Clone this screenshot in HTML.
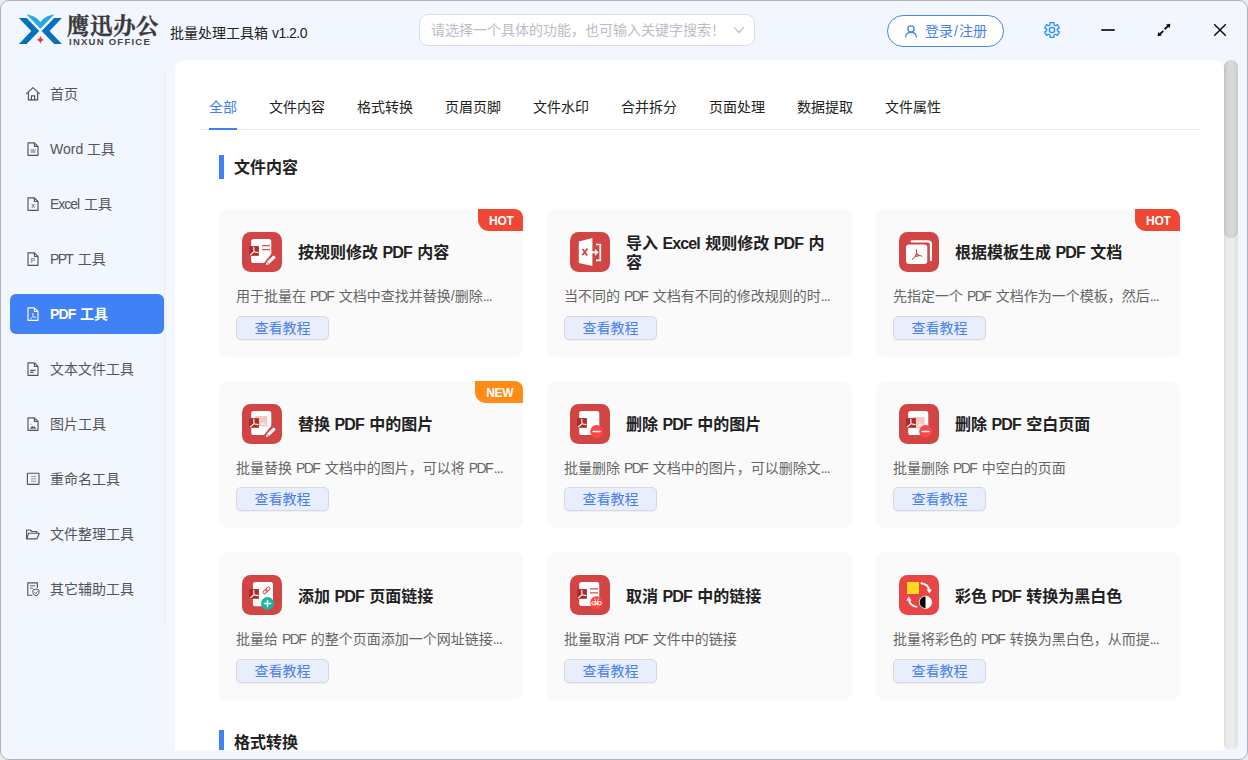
<!DOCTYPE html>
<html lang="zh-CN">
<head>
<meta charset="utf-8">
<title>鹰迅办公 批量处理工具箱</title>
<style>
*{box-sizing:border-box;margin:0;padding:0}
html,body{width:1248px;height:760px;overflow:hidden;background:#ebebeb}
body{font-family:"Liberation Sans","Noto Sans CJK SC",sans-serif;color:#222;position:relative}
.win{position:absolute;left:0;top:0;width:1248px;height:760px;background:#f2f6fe;border:1px solid #b3b3b3;border-radius:9px;overflow:hidden}
.abs{position:absolute}
/* ---------- title bar ---------- */
.brand-cn{position:absolute;left:66px;top:8px;font-family:"Noto Serif CJK SC","Noto Sans CJK SC",serif;font-weight:700;-webkit-text-stroke:0.35px #3a3a3a;font-size:22.6px;line-height:30px;color:#3a3a3a;letter-spacing:0.4px;white-space:nowrap}
.brand-en{position:absolute;left:68px;top:34.5px;font-weight:700;font-size:9.5px;line-height:12px;color:#444;letter-spacing:1.25px;white-space:nowrap}
.app-title{position:absolute;left:169px;top:22px;font-size:14px;line-height:20px;color:#222;white-space:nowrap}
.search{position:absolute;left:418px;top:13px;width:336px;height:32px;border:1px solid #d9dde6;border-radius:9px;background:#fff}
.search span{position:absolute;left:11px;top:5px;font-size:14px;line-height:20px;color:#b9bdc6;white-space:nowrap}
.login{position:absolute;left:886px;top:14px;width:117px;height:32px;border:1px solid #4a86f2;border-radius:16px;background:#fff}
.login span{position:absolute;left:37px;top:5px;font-size:14px;line-height:20px;color:#3f7ff2;white-space:nowrap}
/* ---------- sidebar ---------- */
.nav{position:absolute;left:9px;width:154px;height:40px;border-radius:6px}
.nav span{position:absolute;left:40px;top:10px;font-size:14px;line-height:20px;color:#555;white-space:nowrap}
.nav svg{position:absolute;left:16px;top:13px}
.nav.on{background:#4082f5}
.nav.on span{color:#fff;font-weight:700}
.vline{position:absolute;left:163px;top:69px;width:1px;height:555px;background:#ebebf1}
/* ---------- panel ---------- */
.panel{position:absolute;left:174px;top:59px;width:1049px;height:690px;background:#fff;border-radius:10px 10px 0 0;overflow:hidden}
.tab{position:absolute;top:37px;font-size:14px;line-height:20px;color:#222;white-space:nowrap}
.tab.on{color:#3f7ff2}
.tabline{position:absolute;left:24px;top:69px;width:1002px;height:1px;background:#e9edf2}
.tabink{position:absolute;left:34px;top:68px;width:28px;height:2px;background:#3f7ff2}
.sec-bar{position:absolute;left:44px;width:5px;height:24px;background:#4082f5}
.sec-t{position:absolute;left:59px;font-size:16px;font-weight:700;line-height:24px;color:#222;white-space:nowrap}
.card{position:absolute;width:304px;height:148px;background:#fafafa;border-radius:8px;overflow:hidden}
.card .ico{position:absolute;left:23px;top:23px;width:40px;height:40px}
.card h3{position:absolute;left:79px;top:23.5px;width:210px;height:40px;display:flex;align-items:center;font-size:16px;font-weight:700;line-height:19px;color:#222}
.card p{position:absolute;left:17px;top:77px;font-size:14px;line-height:20px;color:#666;white-space:nowrap}
.card .btn{position:absolute;left:17px;top:107px;width:93px;height:24px;border:1px solid #d5d8e3;border-radius:5px;background:#e9eefc;box-shadow:0 1px 1px rgba(0,0,0,.05);color:#4a7ff0;font-size:14px;line-height:22px;text-align:center}
.badge{position:absolute;right:0;top:0;height:22px;border-radius:0 8px 0 11px;color:#fff;font-weight:700;font-size:12px;line-height:24px;text-align:center;letter-spacing:-0.3px;padding-left:1.5px}
.badge.hot{width:45px;background:#f04634}
.badge.new{width:48px;background:#ff8a15}
/* scrollbar */
.sb-track{position:absolute;left:1223px;top:59px;width:14px;height:690px;background:linear-gradient(to right,#dcdcdc 0,#eaeaea 22%,#ededed 60%,#e1e1e1 100%);border-radius:7px}
.sb-thumb{position:absolute;left:1223px;top:59px;width:14px;height:178px;background:linear-gradient(to right,#c4c4c4 0,#d6d6d6 28%,#dadada 60%,#cbcbcb 100%);border-radius:7px;box-shadow:inset 0 -1px 2px rgba(0,0,0,.06)}
i{font-style:normal}
.card h3 i{letter-spacing:-0.87px;margin-right:0.87px}
.card p i{letter-spacing:-1.5px;margin-right:1.5px}
.card p i.d{letter-spacing:-0.9px;margin-right:0}
</style>
</head>
<body>
<div class="win">

<!-- title bar -->
<svg class="abs" style="left:16px;top:11px" width="48" height="36" viewBox="17 12 48 36">
<path d="M18.9,18 H26.6 L39.2,31 L26.6,44.1 H18.9 L31.3,31 Z" fill="#0670bd"/>
<path d="M61.9,18 H54.2 L41.6,31 L54.2,44.1 H61.9 L49.5,31 Z" fill="#0670bd"/>
<path d="M26.6,14.4 C32.5,15 37.5,18 40.4,22 C43.3,18 48.3,15 54.2,14.4 L40.4,28.8 Z" fill="#2aa9e1"/>
<path d="M40.4,35.6 C40.8,38.4 41.6,39.4 44.2,39.9 C41.6,40.4 40.8,41.4 40.4,44.2 C40,41.4 39.2,40.4 36.6,39.9 C39.2,39.4 40,38.4 40.4,35.6 Z" fill="#ee2e3a"/>
</svg>
<svg class="abs" style="left:1043px;top:21px" width="16" height="16" viewBox="0 0 16 16"><path d="M6.03,2.87 L6.07,0.55 L9.93,0.55 L9.97,2.87 L11.46,3.73 L13.49,2.60 L15.42,5.94 L13.43,7.14 L13.43,8.86 L15.42,10.06 L13.49,13.40 L11.46,12.27 L9.97,13.13 L9.93,15.45 L6.07,15.45 L6.03,13.13 L4.54,12.27 L2.51,13.40 L0.58,10.06 L2.57,8.86 L2.57,7.14 L0.58,5.94 L2.51,2.60 L4.54,3.73 Z" fill="#e9f3ff" stroke="#2b8bfd" stroke-width="1.25" stroke-linejoin="round"/><circle cx="8" cy="8" r="2.7" fill="#eef5ff" stroke="#2b8bfd" stroke-width="1.25"/></svg><div class="abs" style="left:1100px;top:28px;width:14px;height:2px;background:#333;border-radius:1px"></div><svg class="abs" style="left:1155px;top:22px" width="16" height="16" viewBox="0 0 16 16"><path d="M9.1,5.7 L12.4,2.6 M6.8,8.4 L3.5,11.5" stroke="#111" stroke-width="1.9" stroke-linecap="round" fill="none"/><path d="M14.4,0.8 L10,1.5 L13.7,5.2 Z M1.5,13.3 L5.9,12.6 L2.2,8.9 Z" fill="#111"/></svg><svg class="abs" style="left:1212px;top:22.4px" width="14" height="14" viewBox="0 0 14 14"><path d="M1.2,1.2 L12.8,12.8 M12.8,1.2 L1.2,12.8" stroke="#111" stroke-width="1.5" fill="none"/></svg>
<div class="brand-cn">鹰迅办公</div>
<div class="brand-en">INXUN OFFICE</div>
<div class="app-title">批量处理工具箱 <i style="letter-spacing:-0.5px">v1.2.0</i></div>
<div class="search"><svg class="abs" style="left:312px;top:10px" width="14" height="10" viewBox="0 0 14 10"><path d="M2,2 L7,7.6 L12,2" fill="none" stroke="#b3b7c0" stroke-width="1.1"/></svg><span>请选择一个具体的功能，也可输入关键字搜索！</span></div>
<div class="login"><svg class="abs" style="left:16px;top:8px" width="14" height="15" viewBox="0 0 14 15"><circle cx="7" cy="4.9" r="3.1" fill="none" stroke="#3f7ff2" stroke-width="1.25"/><path d="M1.6,12.9 C1.9,9.6 4.2,8.3 7,8.3 C9.8,8.3 12.1,9.6 12.4,12.9" fill="none" stroke="#3f7ff2" stroke-width="1.25" stroke-linecap="round"/></svg><span>登录<i style="margin:0 1px">/</i>注册</span></div>

<!-- sidebar -->
<div class="nav" style="top:73px"><svg width="16" height="15" viewBox="0 0 16 15" style="left:15px;top:12px"><g fill="none" stroke="#555" stroke-width="1.2" stroke-linejoin="round" stroke-linecap="round"><path d="M1.6,7.6 L8,1.6 L14.4,7.6"/><path d="M3.4,6.6 V13.9 H12.6 V6.6"/><path d="M6.4,13.9 V9.8 H9.6 V13.9"/></g></svg><span>首页</span></div>
<div class="nav" style="top:128px"><svg width="14" height="16" viewBox="0 0 14 16"><g fill="none" stroke="#555" stroke-width="1.15" stroke-linejoin="round"><path d="M2,0.9 H8.4 L12,4.5 V13.3 H2 Z"/><path d="M8.4,0.9 V4.5 H12"/></g><text x="7" y="11.3" font-family="Liberation Sans,sans-serif" font-size="7" font-weight="400" text-anchor="middle" fill="#555" stroke="none">w</text><g></g></svg><span>Word 工具</span></div>
<div class="nav" style="top:183px"><svg width="14" height="16" viewBox="0 0 14 16"><g fill="none" stroke="#555" stroke-width="1.15" stroke-linejoin="round"><path d="M2,0.9 H8.4 L12,4.5 V13.3 H2 Z"/><path d="M8.4,0.9 V4.5 H12"/></g><text x="7" y="11.3" font-family="Liberation Sans,sans-serif" font-size="7.5" font-weight="400" text-anchor="middle" fill="#555" stroke="none">x</text><g></g></svg><span><i style="letter-spacing:-1px;margin-right:1px">Excel</i> 工具</span></div>
<div class="nav" style="top:238px"><svg width="14" height="16" viewBox="0 0 14 16"><g fill="none" stroke="#555" stroke-width="1.15" stroke-linejoin="round"><path d="M2,0.9 H8.4 L12,4.5 V13.3 H2 Z"/><path d="M8.4,0.9 V4.5 H12"/></g><text x="7" y="11.3" font-family="Liberation Sans,sans-serif" font-size="6.5" font-weight="400" text-anchor="middle" fill="#555" stroke="none">P</text><g></g></svg><span><i style="letter-spacing:-1.7px;margin-right:1.7px">PPT</i> 工具</span></div>
<div class="nav on" style="top:293px"><svg width="14" height="16" viewBox="0 0 14 16"><g fill="none" stroke="#fff" stroke-width="1.15" stroke-linejoin="round"><path d="M2,0.9 H8.4 L12,4.5 V13.3 H2 Z"/><path d="M8.4,0.9 V4.5 H12"/><path d="M6.8,6 L7,9.4 L4.4,12.4 M7,9.4 L10,10.6" stroke-width="0.9"/></g></svg><span><i style="letter-spacing:-0.9px;margin-right:0.9px">PDF</i> 工具</span></div>
<div class="nav" style="top:348px"><svg width="14" height="16" viewBox="0 0 14 16"><g fill="none" stroke="#555" stroke-width="1.15" stroke-linejoin="round"><path d="M2,0.9 H8.4 L12,4.5 V13.3 H2 Z"/><path d="M8.4,0.9 V4.5 H12"/><path d="M4.2,8.3 H9.6 M4.2,10.4 H7.6" stroke-width="1.2"/></g></svg><span>文本文件工具</span></div>
<div class="nav" style="top:403px"><svg width="14" height="16" viewBox="0 0 14 16"><g fill="none" stroke="#555" stroke-width="1.15" stroke-linejoin="round"><path d="M2,0.9 H8.4 L12,4.5 V13.3 H2 Z"/><path d="M8.4,0.9 V4.5 H12"/><path d="M4.3,11.6 L6.2,9 L7.4,10.4 L8.4,9.4 L9.9,11.6 Z" fill="#555" stroke-width="0.4"/><path d="M4.6,7.2 h0.8" stroke-width="0.9"/></g></svg><span>图片工具</span></div>
<div class="nav" style="top:458px"><svg width="16" height="14" viewBox="0 0 16 14" style="left:15px;top:13px"><g fill="none" stroke="#555" stroke-width="1.15"><rect x="2.4" y="1.2" width="11.6" height="11.2" rx="0.6"/><path d="M6,4.4 H11.2 M6,6.8 H11.2 M6,9.2 H11.2" stroke-width="0.9" stroke="#888"/></g></svg><span>重命名工具</span></div>
<div class="nav" style="top:513px"><svg width="16" height="14" viewBox="0 0 16 14" style="left:15px;top:14px"><g fill="none" stroke="#555" stroke-width="1.15" stroke-linejoin="round"><path d="M1.6,10.9 V2 H5.4 L6.8,3.5 H11.8 V5.2"/><path d="M1.6,10.9 L3.7,5.2 H14.3 L12,10.9 Z"/></g></svg><span>文件整理工具</span></div>
<div class="nav" style="top:568px"><svg width="16" height="16" viewBox="0 0 16 16" style="left:15px;top:12px"><g fill="none" stroke="#555" stroke-width="1.15" stroke-linejoin="round"><path d="M7.6,14.2 H2.8 V1.8 H12.4 V7"/><path d="M5,4.8 H10.2 M5,7.2 H8" stroke-width="0.9"/><path d="M11,8 L14,9 V11.4 C14,13 12.6,14.2 11,14.8 C9.4,14.2 8,13 8,11.4 V9 Z" stroke-width="1"/><path d="M9.6,11.4 L10.7,12.5 L12.6,10.4" stroke-width="0.9"/></g></svg><span>其它辅助工具</span></div>
<div class="vline"></div>

<!-- main panel -->
<div class="panel">
  <div class="tab on" style="left:34px">全部</div>
  <div class="tab" style="left:94px">文件内容</div>
  <div class="tab" style="left:182px">格式转换</div>
  <div class="tab" style="left:270px">页眉页脚</div>
  <div class="tab" style="left:358px">文件水印</div>
  <div class="tab" style="left:446px">合并拆分</div>
  <div class="tab" style="left:534px">页面处理</div>
  <div class="tab" style="left:622px">数据提取</div>
  <div class="tab" style="left:710px">文件属性</div>
  <div class="tabline"></div>
  <div class="tabink"></div>

  <div class="sec-bar" style="top:95px"></div>
  <div class="sec-t" style="top:96px">文件内容</div>

  <!-- row 1 -->
  <div class="card" style="left:44px;top:149px">
    <!--i1--><svg class="ico" width="40" height="40" viewBox="0 0 40 40"><rect x="0" y="0" width="40" height="40" rx="8.5" fill="#d14545"/><rect x="9.2" y="7" width="20.1" height="24" rx="2.6" fill="#fff"/><path d="M20,13.6 h8 M20,17.7 h8" stroke="#e04a4a" stroke-width="1.3" fill="none"/><rect x="7.1" y="14.1" width="9.8" height="9.7" fill="#ad2b2b"/><path d="M11.799999999999999,15.4 L12.0,19.7 L8.299999999999999,22.799999999999997 M12.0,19.7 L16.0,20.599999999999998" stroke="#fff" stroke-width="1.1" fill="none" stroke-linecap="round"/><path d="M30.2,20.8 V33 H20.3 Z" fill="#d14545"/><g transform="translate(28.4,28.55) rotate(-44)"><path d="M-6.2,0 L-3.9,-1.65 V1.65 Z" fill="#fff"/><rect x="-3.3" y="-1.65" width="9.3" height="3.3" rx="0.7" fill="#fff"/></g></svg>
    <h3><span>按规则修改 <i>PDF</i> 内容</span></h3>
    <p>用于批量在 <i>PDF</i> 文档中查找并替换/删除<i class="d">...</i></p>
    <div class="btn">查看教程</div>
    <div class="badge hot">HOT</div>
  </div>
  <div class="card" style="width:305px;left:372px;top:149px">
    <!--i2--><svg class="ico" width="40" height="40" viewBox="0 0 40 40"><rect x="0" y="0" width="40" height="40" rx="8.5" fill="#d14545"/><path d="M8.8,9.4 L22.4,5.9 V34.1 L8.8,31 Z" fill="#fff"/><path d="M12.6,17 L17.2,23.6 M17.6,16.6 L12.2,23.2" stroke="#d14545" stroke-width="1.7" fill="none"/><path d="M26,12.5 H30.3 V28.3 H26" stroke="#fff" stroke-width="1.7" fill="none"/><path d="M22,19.3 H25 V16.9 L28.7,20.3 L25,23.7 V21.3 H22 Z" fill="#fff"/></svg>
    <h3><span>导入 <i>Excel</i> 规则修改 <i>PDF</i> 内容</span></h3>
    <p>当不同的 <i>PDF</i> 文档有不同的修改规则的时<i class="d">...</i></p>
    <div class="btn">查看教程</div>
  </div>
  <div class="card" style="left:701px;top:149px">
    <!--i3--><svg class="ico" width="40" height="40" viewBox="0 0 40 40"><rect x="0" y="0" width="40" height="40" rx="8.5" fill="#d14545"/><path d="M12.6,9.4 H29 a2.9,2.9 0 0 1 2.9,2.9 V28.2" stroke="#fff" stroke-width="2.2" stroke-linecap="round" fill="none"/><rect x="7" y="12.5" width="21.3" height="19.5" rx="3" fill="#fff"/><path d="M17.4,17.6 L17.6,22.6 L13.2,27.6 M17.6,22.6 L23,24.2 M16.3,24.2 L17.7,21 L19.6,23.6 Z" stroke="#c23a3a" stroke-width="0.95" fill="none" stroke-linecap="round" stroke-linejoin="round"/></svg>
    <h3><span>根据模板生成 <i>PDF</i> 文档</span></h3>
    <p>先指定一个 <i>PDF</i> 文档作为一个模板，然后<i class="d">...</i></p>
    <div class="btn">查看教程</div>
    <div class="badge hot">HOT</div>
  </div>

  <!-- row 2 -->
  <div class="card" style="left:44px;top:321px;height:147px">
    <!--i4--><svg class="ico" width="40" height="40" viewBox="0 0 40 40"><rect x="0" y="0" width="40" height="40" rx="8.5" fill="#d14545"/><rect x="9.2" y="7" width="20.1" height="24" rx="2.6" fill="#fff"/><rect x="12.9" y="12" width="12.4" height="10.5" rx="0.8" fill="#f9c6c6"/><path d="M18.108,21.03 L20.588,17.775 L22.076,19.56 L22.82,18.93 L24.68,21.03 Z" fill="#fdeaea"/><rect x="7.1" y="14.1" width="9.8" height="9.7" fill="#ad2b2b"/><path d="M11.799999999999999,15.4 L12.0,19.7 L8.299999999999999,22.799999999999997 M12.0,19.7 L16.0,20.599999999999998" stroke="#fff" stroke-width="1.1" fill="none" stroke-linecap="round"/><path d="M30.2,20.8 V33 H20.3 Z" fill="#d14545"/><g transform="translate(28.4,28.55) rotate(-44)"><path d="M-6.2,0 L-3.9,-1.65 V1.65 Z" fill="#fff"/><rect x="-3.3" y="-1.65" width="9.3" height="3.3" rx="0.7" fill="#fff"/></g></svg>
    <h3><span>替换 <i>PDF</i> 中的图片</span></h3>
    <p>批量替换 <i>PDF</i> 文档中的图片，可以将 <i>PDF</i><i class="d">...</i></p>
    <div class="btn" style="top:106px">查看教程</div>
    <div class="badge new">NEW</div>
  </div>
  <div class="card" style="width:305px;left:372px;top:321px;height:147px">
    <!--i5--><svg class="ico" width="40" height="40" viewBox="0 0 40 40"><rect x="0" y="0" width="40" height="40" rx="8.5" fill="#d14545"/><rect x="9.2" y="7" width="20.1" height="24" rx="2.6" fill="#fff"/><rect x="7.1" y="14.1" width="9.8" height="9.7" fill="#ad2b2b"/><path d="M11.799999999999999,15.4 L12.0,19.7 L8.299999999999999,22.799999999999997 M12.0,19.7 L16.0,20.599999999999998" stroke="#fff" stroke-width="1.1" fill="none" stroke-linecap="round"/><circle cx="26.6" cy="27.5" r="6.4" fill="#ff4545"/><path d="M23.200000000000003,27.5 h6.8" stroke="#fff" stroke-width="1.6" stroke-linecap="round"/></svg>
    <h3><span>删除 <i>PDF</i> 中的图片</span></h3>
    <p>批量删除 <i>PDF</i> 文档中的图片，可以删除文<i class="d">...</i></p>
    <div class="btn" style="top:106px">查看教程</div>
  </div>
  <div class="card" style="left:701px;top:321px;height:147px">
    <!--i6--><svg class="ico" width="40" height="40" viewBox="0 0 40 40"><rect x="0" y="0" width="40" height="40" rx="8.5" fill="#d14545"/><rect x="9.2" y="7" width="20.1" height="24" rx="2.6" fill="#fff"/><rect x="13.1" y="12.9" width="12.6" height="11.1" rx="0.8" fill="#f9c6c6"/><path d="M18.392,22.445999999999998 L20.912,19.005000000000003 L22.424,20.892 L23.18,20.226 L25.07,22.445999999999998 Z" fill="#fdeaea"/><rect x="7.1" y="14.1" width="9.8" height="9.7" fill="#ad2b2b"/><path d="M11.799999999999999,15.4 L12.0,19.7 L8.299999999999999,22.799999999999997 M12.0,19.7 L16.0,20.599999999999998" stroke="#fff" stroke-width="1.1" fill="none" stroke-linecap="round"/><circle cx="26.6" cy="27.5" r="6.4" fill="#ff4545"/><path d="M23.200000000000003,27.5 h6.8" stroke="#fff" stroke-width="1.6" stroke-linecap="round"/></svg>
    <h3><span>删除 <i>PDF</i> 空白页面</span></h3>
    <p>批量删除 <i>PDF</i> 中空白的页面</p>
    <div class="btn" style="top:106px">查看教程</div>
  </div>

  <!-- row 3 -->
  <div class="card" style="left:44px;top:492px">
    <!--i7--><svg class="ico" width="40" height="40" viewBox="0 0 40 40"><rect x="0" y="0" width="40" height="40" rx="8.5" fill="#d14545"/><rect x="10.9" y="6.9" width="20.1" height="24.4" rx="2.6" fill="#fff"/><rect x="7.1" y="14.1" width="9.8" height="9.7" fill="#ad2b2b"/><path d="M11.799999999999999,15.4 L12.0,19.7 L8.299999999999999,22.799999999999997 M12.0,19.7 L16.0,20.599999999999998" stroke="#fff" stroke-width="1.1" fill="none" stroke-linecap="round"/><g transform="translate(24.5,15.4) rotate(-43)" fill="none" stroke="#e14b4b" stroke-width="0.95"><rect x="-4.2" y="-1.45" width="4.9" height="2.9" rx="1.45"/><rect x="-0.7" y="-1.45" width="4.9" height="2.9" rx="1.45"/></g><circle cx="25.5" cy="28.5" r="6.5" fill="#16b8a2"/><path d="M22.4,28.5 h6.2 M25.5,25.4 v6.2" stroke="#fff" stroke-width="1.5" stroke-linecap="round"/></svg>
    <h3 style="top:24.5px"><span>添加 <i>PDF</i> 页面链接</span></h3>
    <p>批量给 <i>PDF</i> 的整个页面添加一个网址链接<i class="d">...</i></p>
    <div class="btn">查看教程</div>
  </div>
  <div class="card" style="width:305px;left:372px;top:492px">
    <!--i8--><svg class="ico" width="40" height="40" viewBox="0 0 40 40"><rect x="0" y="0" width="40" height="40" rx="8.5" fill="#d14545"/><rect x="9.2" y="7.1" width="20.1" height="23.8" rx="2.6" fill="#fff"/><path d="M20,13.9 h8 M20,17.9 h8" stroke="#e04a4a" stroke-width="1.3" fill="none"/><rect x="7.1" y="14.1" width="9.8" height="9.7" fill="#ad2b2b"/><path d="M11.799999999999999,15.4 L12.0,19.7 L8.299999999999999,22.799999999999997 M12.0,19.7 L16.0,20.599999999999998" stroke="#fff" stroke-width="1.1" fill="none" stroke-linecap="round"/><circle cx="26.6" cy="27.6" r="6.4" fill="#ff4545"/><g fill="none" stroke="#fff" stroke-width="1" stroke-linecap="round" stroke-linejoin="round"><path d="M25.6,26.6 h-2.2 a1.6,1.6 0 0 0 0,3.2 h2.2 z"/><path d="M27.6,26.6 h2.2 a1.6,1.6 0 0 1 0,3.2 h-2.2 z"/><path d="M25.4,25.2 l-0.6,-1.3 M27.8,25.2 l0.6,-1.3 M24.6,28.2 h4"/></g></svg>
    <h3 style="top:24.5px"><span>取消 <i>PDF</i> 中的链接</span></h3>
    <p>批量取消 <i>PDF</i> 文件中的链接</p>
    <div class="btn">查看教程</div>
  </div>
  <div class="card" style="left:701px;top:492px">
    <!--i9--><svg class="ico" width="40" height="40" viewBox="0 0 40 40"><rect x="0" y="0" width="40" height="40" rx="8.5" fill="#e84646"/><rect x="8" y="7" width="12" height="12" fill="#ffd91c"/><circle cx="26.5" cy="27.3" r="6.2" fill="#fff"/><path d="M26.5,21.1 a6.2,6.2 0 0 0 0,12.4 z" fill="#000"/><circle cx="26.5" cy="27.3" r="6.2" fill="none" stroke="#fff" stroke-width="0.7"/><path d="M22.4,8.3 C26.6,9 29.6,11.6 30.3,15.3" stroke="#fff" stroke-width="1.9" fill="none" stroke-linecap="round"/><path d="M27.7,14.4 L32.9,14.6 L30.4,18.6 Z" fill="#fff"/><path d="M17.5,31.9 C13.3,31.2 10.6,28.6 9.9,24.9" stroke="#fff" stroke-width="1.9" fill="none" stroke-linecap="round"/><path d="M12.5,25.8 L7.3,25.6 L9.8,21.6 Z" fill="#fff"/></svg>
    <h3 style="top:24.5px"><span>彩色 <i>PDF</i> 转换为黑白色</span></h3>
    <p>批量将彩色的 <i>PDF</i> 转换为黑白色，从而提<i class="d">...</i></p>
    <div class="btn">查看教程</div>
  </div>

  <div class="sec-bar" style="top:670px"></div>
  <div class="sec-t" style="top:671px">格式转换</div>
</div>

<div class="sb-track"></div>
<div class="sb-thumb"></div>

</div>
</body>
</html>
